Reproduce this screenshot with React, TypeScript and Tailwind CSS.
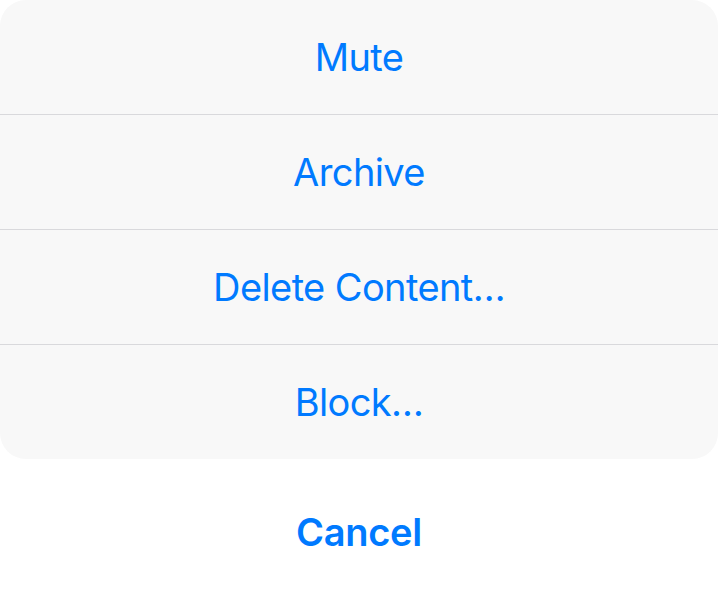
export default function App() {
  const items = ["Mute", "Archive", "Delete Content…", "Block…"];
  return (
    <div className="w-[718px] h-[589px] bg-white flex flex-col" style={{ fontFamily: "Inter, 'Liberation Sans', sans-serif" }}>
      <div className="bg-[#f8f8f8] rounded-[26px] flex flex-col overflow-hidden">
        {items.map((t, i) => (
          <div key={t} className={`h-[114px] flex items-center justify-center text-[#007aff] text-[38px] tracking-[-0.6px] ${i < items.length - 1 ? "border-b border-[#d9d9dc] h-[115px]" : ""}`}>
            {t}
          </div>
        ))}
      </div>
      <div className="mt-[16px] h-[114px] flex items-center justify-center text-[#007aff] text-[38px] font-semibold tracking-[-0.3px]">
        Cancel
      </div>
    </div>
  );
}
